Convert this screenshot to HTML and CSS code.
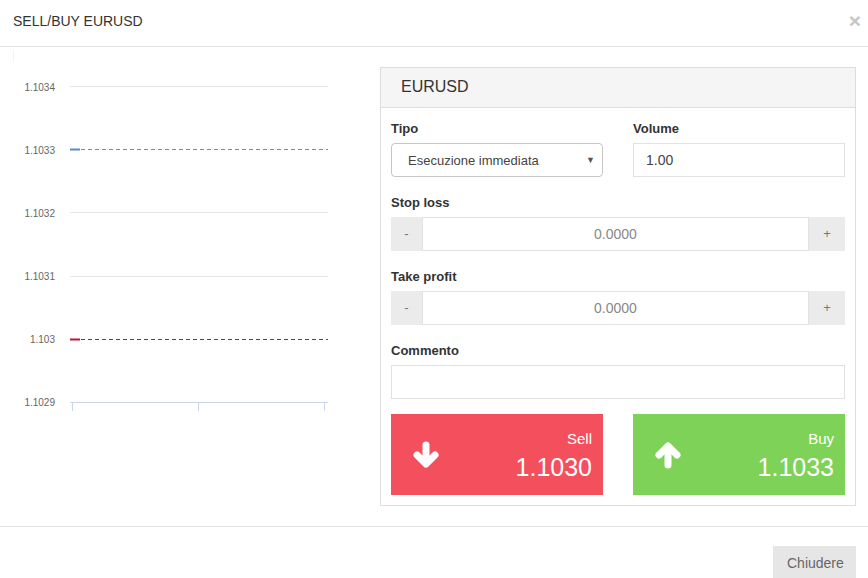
FILE: index.html
```html
<!DOCTYPE html>
<html lang="it">
<head>
<meta charset="utf-8">
<title>SELL/BUY EURUSD</title>
<link rel="stylesheet" href="styles.css">
</head>
<body>
<div class="modal">
  <div class="modal-header">
    <h4 class="modal-title">SELL/BUY EURUSD</h4>
    <span class="close">&times;</span>
  </div>
  <div class="modal-body">
    <div class="chart">
      <svg width="340" height="479" viewBox="0 0 340 479" xmlns="http://www.w3.org/2000/svg">
        <defs>
          <pattern id="dashBlue" x="81" y="0" width="7" height="1" patternUnits="userSpaceOnUse">
            <rect x="0" y="0" width="4" height="1" fill="#6590d0"/>
          </pattern>
          <pattern id="dashRed" x="81" y="0" width="7" height="1" patternUnits="userSpaceOnUse">
            <rect x="0" y="0" width="4" height="1" fill="#a11a55"/>
          </pattern>
        </defs>
        <rect x="13" y="3" width="1" height="12" fill="#f4f4f4"/>
        <g fill="#e6e6e6">
          <rect x="70" y="39" width="258" height="1"/>
          <rect x="70" y="165" width="258" height="1"/>
          <rect x="70" y="229" width="258" height="1"/>
        </g>
        <g fill="#ccd6eb">
          <rect x="70" y="355" width="258" height="1"/>
          <rect x="72" y="355" width="1" height="9"/>
          <rect x="198" y="355" width="1" height="9"/>
          <rect x="324" y="355" width="1" height="9"/>
        </g>
        <rect x="81" y="102" width="247" height="1" fill="url(#dashBlue)"/>
        <rect x="70" y="101.5" width="10" height="2" fill="#5a88c8"/>
        <rect x="81" y="292" width="247" height="1" fill="url(#dashRed)"/>
        <rect x="70" y="291.5" width="10" height="2" fill="#c2143f"/>
        <g class="axis-label" text-anchor="end">
          <text x="55" y="43.5">1.1034</text>
          <text x="55" y="106.5">1.1033</text>
          <text x="55" y="169.5">1.1032</text>
          <text x="55" y="233">1.1031</text>
          <text x="55" y="296">1.103</text>
          <text x="55" y="359">1.1029</text>
        </g>
      </svg>
    </div>
    <div class="panel">
      <div class="panel-heading">EURUSD</div>
      <div class="panel-body">
        <div class="row">
          <div class="group">
            <label class="lbl">Tipo</label>
            <div class="select"><span>Esecuzione immediata</span><span class="caret">&#9660;</span></div>
          </div>
          <div class="group">
            <label class="lbl">Volume</label>
            <div class="input">1.00</div>
          </div>
        </div>
        <div class="group">
          <label class="lbl">Stop loss</label>
          <div class="input-group">
            <span class="addon minus">-</span>
            <div class="input center">0.0000</div>
            <span class="addon plus">+</span>
          </div>
        </div>
        <div class="group">
          <label class="lbl">Take profit</label>
          <div class="input-group">
            <span class="addon minus">-</span>
            <div class="input center">0.0000</div>
            <span class="addon plus">+</span>
          </div>
        </div>
        <div class="group">
          <label class="lbl">Commento</label>
          <div class="input"></div>
        </div>
        <div class="row actions">
          <div class="trade sell">
            <svg class="arrow" width="28" height="28" viewBox="0 0 28 28" xmlns="http://www.w3.org/2000/svg">
              <g fill="none" stroke="#fff" stroke-width="7" stroke-linecap="round" stroke-linejoin="round">
                <line x1="14" y1="4" x2="14" y2="22"/>
                <polyline points="5,14 14,23 23,14"/>
              </g>
            </svg>
            <div class="trade-text">
              <div class="trade-name">Sell</div>
              <div class="trade-price">1.1030</div>
            </div>
          </div>
          <div class="trade buy">
            <svg class="arrow" width="28" height="28" viewBox="0 0 28 28" xmlns="http://www.w3.org/2000/svg">
              <g fill="none" stroke="#fff" stroke-width="7" stroke-linecap="round" stroke-linejoin="round">
                <line x1="14" y1="24" x2="14" y2="6"/>
                <polyline points="5,14 14,5 23,14"/>
              </g>
            </svg>
            <div class="trade-text">
              <div class="trade-name">Buy</div>
              <div class="trade-price">1.1033</div>
            </div>
          </div>
        </div>
      </div>
    </div>
  </div>
  <div class="modal-footer">
    <button class="btn">Chiudere</button>
  </div>
</div>
</body>
</html>
```

FILE: styles.css
```css
* { box-sizing: border-box; }
html, body { margin: 0; padding: 0; background: #fff; }
body {
  font-family: "Liberation Sans", Arial, sans-serif;
  color: #333;
  font-size: 14px;
  overflow: hidden;
}
.modal { width: 868px; }

.modal-header {
  display: flex;
  align-items: flex-start;
  height: 47px;
  padding: 11px 7px 0 13px;
  border-bottom: 1px solid #e5e5e5;
}
.modal-title {
  margin: 0;
  font-size: 14px;
  font-weight: normal;
  line-height: 20px;
  color: #333;
}
.close {
  margin-left: auto;
  margin-top: -1px;
  font-size: 21px;
  font-weight: bold;
  line-height: 1;
  color: #c6c6c6;
}

.modal-body {
  display: flex;
  align-items: flex-start;
  padding: 0 12px 0 0;
  height: 479px;
}
.chart { width: 340px; height: 479px; }
.chart svg { display: block; }
.axis-label text {
  font-family: "Liberation Sans", Arial, sans-serif;
  font-size: 10px;
  fill: #666;
}

.panel {
  margin: 20px 0 0 auto;
  width: 476px;
  border: 1px solid #dddddd;
}
.panel-heading {
  height: 40px;
  padding: 0 20px;
  background: #f5f5f5;
  border-bottom: 1px solid #dddddd;
  font-size: 16px;
  line-height: 38px;
  color: #333;
}
.panel-body {
  padding: 11px 10px 10px 10px;
  display: flex;
  flex-direction: column;
  gap: 16px;
}
.row {
  display: flex;
  gap: 30px;
}
.row .group { flex: 1; }
.group { display: flex; flex-direction: column; }
.lbl {
  font-size: 13px;
  font-weight: bold;
  line-height: 19px;
  margin-bottom: 5px;
  color: #333;
}
.select {
  height: 34px;
  border: 1px solid #c6c6c6;
  border-radius: 4px;
  display: flex;
  align-items: center;
  padding: 0 7px 0 16px;
  font-size: 13px;
  color: #444;
}
.caret {
  margin-left: auto;
  font-size: 9px;
  color: #555;
}
.input {
  height: 34px;
  border: 1px solid #e2e2e2;
  padding: 0 12px;
  font-size: 14px;
  line-height: 32px;
  color: #444;
  background: #fff;
}
.input.center {
  flex: 1;
  text-align: center;
  color: #888;
}
.input-group {
  display: flex;
  height: 34px;
}
.addon {
  background: #ebebeb;
  color: #777;
  font-size: 13px;
  line-height: 34px;
  text-align: center;
}
.addon.minus { width: 31px; }
.addon.plus { width: 36px; }

.actions { margin-top: -1px; }
.trade {
  flex: 1;
  height: 81px;
  display: flex;
  align-items: center;
  padding: 0 11px 0 21px;
  color: #fff;
}
.sell { background: #f34f5c; }
.buy { background: #7ed257; }
.arrow { display: block; flex: none; }
.trade-text {
  margin-left: auto;
  text-align: right;
  align-self: flex-start;
  padding-top: 16px;
}
.trade-name {
  font-size: 15px;
  line-height: 17px;
}
.trade-price {
  margin-top: 6px;
  font-size: 25px;
  line-height: 28px;
}

.modal-footer {
  border-top: 1px solid #e5e5e5;
  padding: 19px 12px 0 0;
  display: flex;
  justify-content: flex-end;
}
.btn {
  font-family: "Liberation Sans", Arial, sans-serif;
  font-size: 14px;
  line-height: 20px;
  padding: 6px 14px;
  border: none;
  background: #e6e6e6;
  color: #666;
  height: 34px;
  width: 83px;
}
```
